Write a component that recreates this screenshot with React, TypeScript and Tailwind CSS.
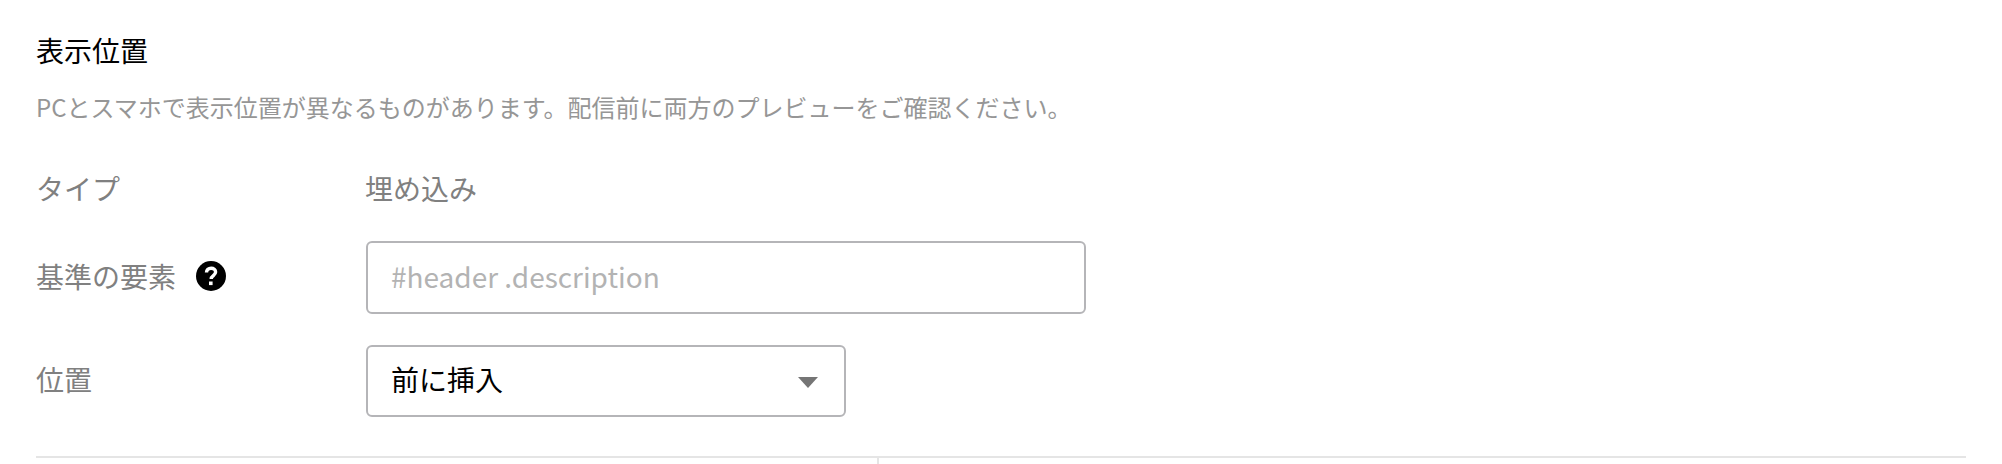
import React from 'react';

const jp = 'font-["Noto_Sans_CJK_JP","Noto_Sans",sans-serif]';

const App: React.FC = () => {
  return (
    <div className={`w-[2002px] h-[464px] overflow-hidden bg-white pt-[31px] px-[36px] ${jp}`}>
      <h2 className="text-[28px] leading-[38px] font-normal text-black">表示位置</h2>
      <p className="mt-[20px] text-[24px] leading-[36px] text-[#969696]">
        PCとスマホで表示位置が異なるものがあります。配信前に両方のプレビューをご確認ください。
      </p>

      {/* タイプ */}
      <div className="mt-[39px] flex items-center h-[48px]">
        <div className="w-[330px] text-[28px] text-[#808080]">タイプ</div>
        <div className="-ml-px text-[28px] text-[#808080]">埋め込み</div>
      </div>

      {/* 基準の要素 */}
      <div className="mt-[29px] flex items-center h-[73px]">
        <div className="w-[330px] pb-[3px] flex items-center gap-[20px] text-[28px] text-[#808080]">
          基準の要素
          <svg width="30" height="30" viewBox="0 0 30 30">
            <circle cx="15" cy="15" r="15" fill="#000" />
            <path d="M10.500 11.500c0-2.600 2-4.300 4.600-4.300 2.600 0 4.500 1.600 4.500 3.900 0 3.400-4.400 3.500-4.400 6.800" fill="none" stroke="#fff" strokeWidth="3.400" />
            <rect x="13" y="20.500" width="3.600" height="3.600" fill="#fff" />
          </svg>
        </div>
        <input
          className="w-[720px] h-[73px] rounded-[6px] border-2 border-[#b5b5b8] pl-[23px] pr-[23px] pb-[4px] text-[28px] text-black placeholder:text-[#b3b3b3] outline-none"
          placeholder="#header .description"
        />
      </div>

      {/* 位置 */}
      <div className="mt-[31px] flex items-center h-[72px]">
        <div className="w-[330px] pb-[4px] text-[28px] text-[#808080]">位置</div>
        <div className="relative w-[480px] h-[72px] rounded-[6px] border-2 border-[#b5b5b8] flex items-center pl-[23px] pb-[4px] text-[28px] text-black">
          前に挿入
          <svg className="absolute right-[26px] top-[30px]" width="20" height="11" viewBox="0 0 20 11">
            <path d="M0 0h20L10 11z" fill="#757575" />
          </svg>
        </div>
      </div>

      {/* 区切り線 */}
      <div className="mt-[39px] flex h-[10px] border-t-2 border-[#e5e5e5]">
        <div className="w-[843px] border-r-2 border-[#e5e5e5]" />
      </div>
    </div>
  );
};

export default App;
